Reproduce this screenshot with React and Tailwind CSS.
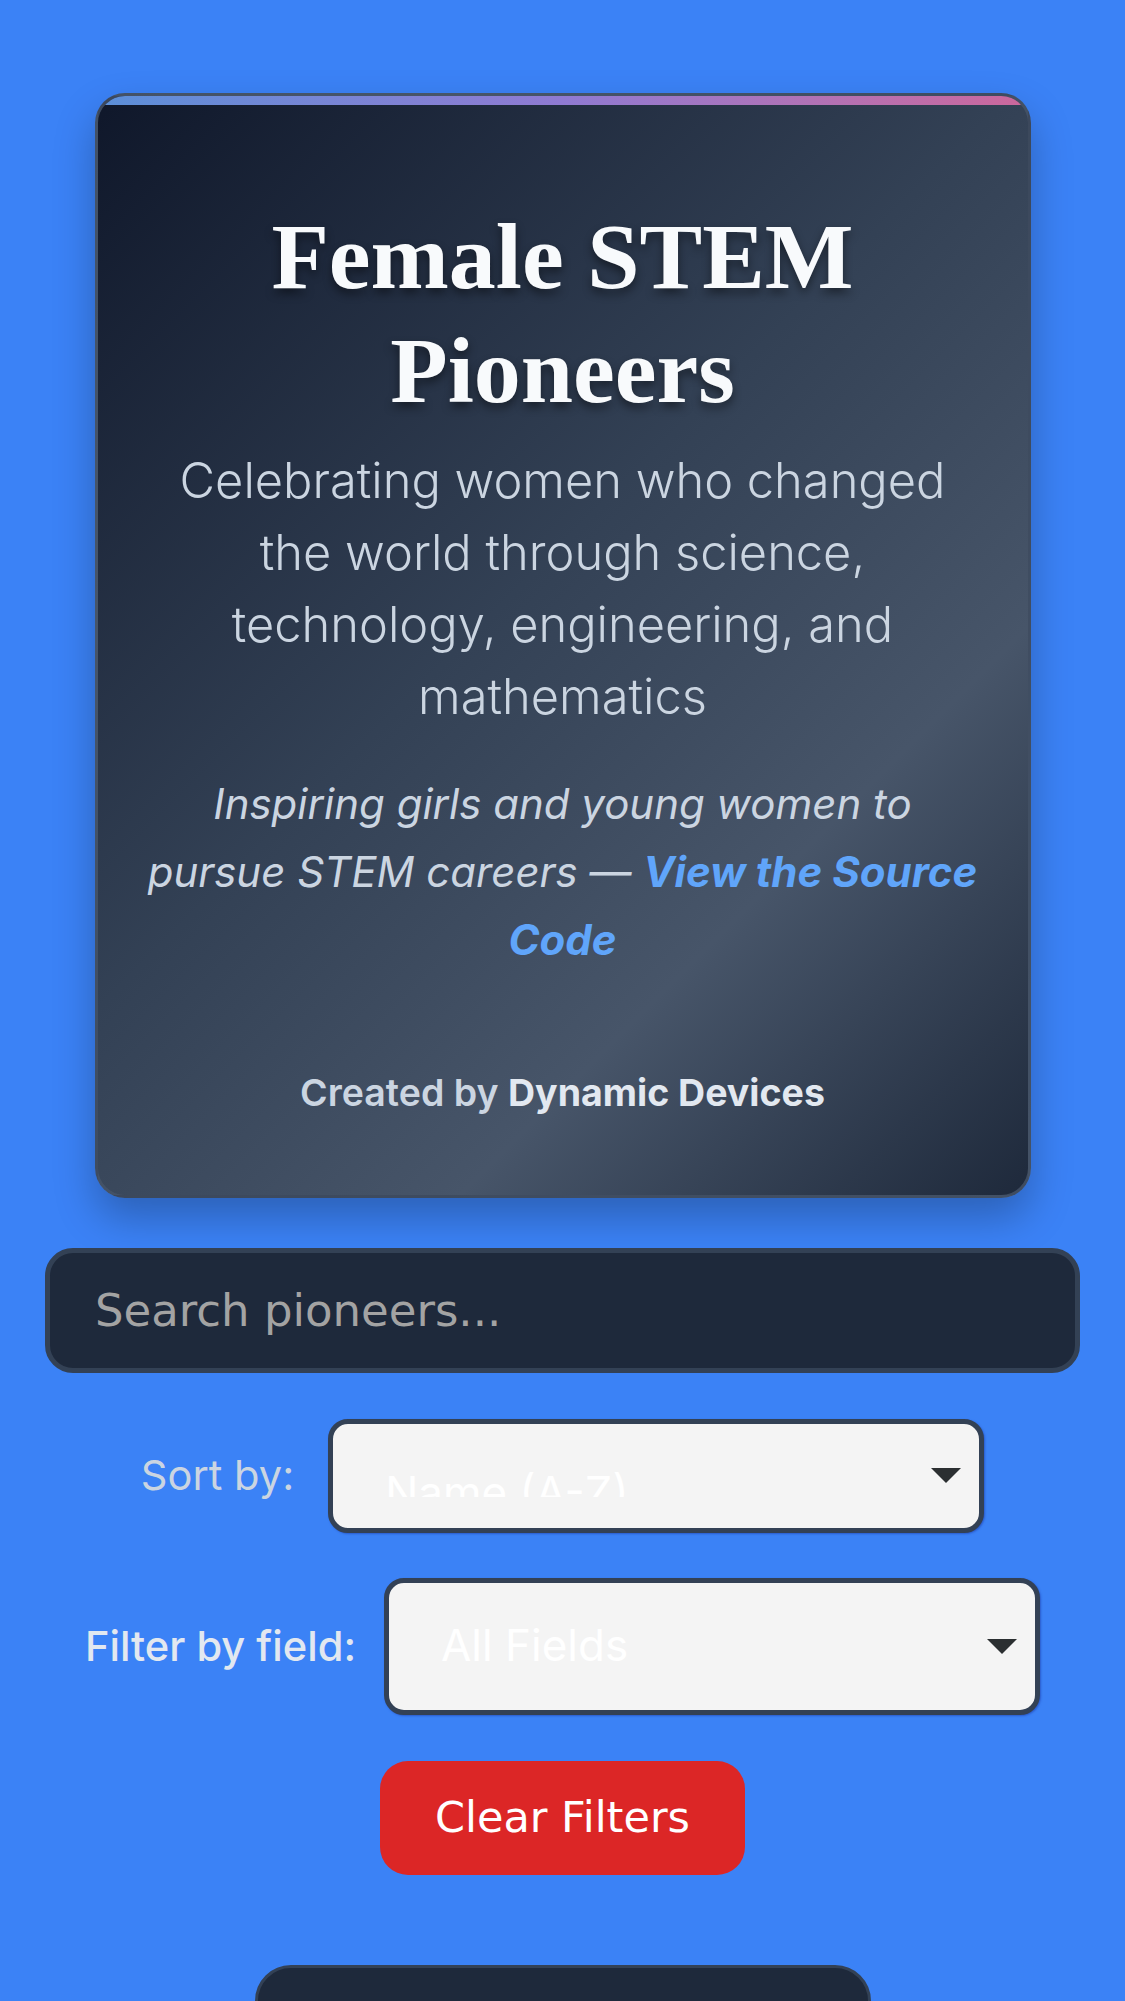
import { useState } from "react"

const Arrow = () => (
  <svg width="30" height="15" viewBox="0 0 30 15" className="shrink-0">
    <path d="M0 0H30L15 15Z" fill="#2b2f31" />
  </svg>
)

// fake native-looking select box, text gets clipped like the original
const SelectBox = ({ value, height, textTop, clipHeight }) => (
  <div
    className="flex items-center w-[656px] rounded-[20px] border-[5px] border-[#334155] bg-[#f4f4f4] pl-[52px] pr-[18px] shadow-[1px_1px_2px_rgba(30,64,175,0.6)]"
    style={{ height }}
  >
    <div className="flex-1 self-start overflow-hidden" style={{ marginTop: textTop, height: clipHeight }}>
      <span className="block font-['Inter',sans-serif] text-[44px] leading-[53px] text-white whitespace-nowrap">
        {value}
      </span>
    </div>
    <Arrow />
  </div>
)

export default function App() {
  const [search, setSearch] = useState("")

  return (
    <div className="min-h-screen w-full bg-[#3b82f6] pt-[93px] pb-10 overflow-hidden">
      {/* Header card */}
      <div className="mx-auto w-[936px] overflow-hidden rounded-[30px] border-[3px] border-[#475569]/80 bg-[linear-gradient(135deg,#0f172a_0%,#334155_45%,#475569_72%,#1e293b_100%)] shadow-[0_20px_40px_rgba(0,0,0,0.25)]">
        <div className="h-[9px] bg-linear-to-r from-[#5a8fd8] via-[#8f7ad2] to-[#cc679c]" />
        <div className="px-[47px] pt-[94px] pb-[73px] text-center font-['Inter',sans-serif]">
          <h1 className="font-['Liberation_Serif',serif] text-[94px] leading-[114px] font-bold text-[#f8fafc] [text-shadow:0_5px_10px_rgba(0,0,0,0.45)]">
            Female STEM Pioneers
          </h1>
          <p className="mt-[18px] text-[48.8px] leading-[72px] font-light text-[#cbd5e1]">
            Celebrating women who changed the world through science, technology, engineering, and mathematics
          </p>
          <p className="mt-[37px] text-[42px] leading-[68px] italic text-[#cbd5e1]">
            Inspiring girls and young women to pursue STEM careers —{" "}
            <a href="#" className="font-bold text-[#60a5fa]">
              View the Source Code
            </a>
          </p>
          <p className="mt-[90px] text-[37.5px] leading-[57.6px] font-semibold text-[#cbd5e1]">
            Created by <span className="font-bold text-[#e2e8f0]">Dynamic Devices</span>
          </p>
        </div>
      </div>

      {/* Controls */}
      <div className="px-[45px] mt-[50px]">
        <input
          type="text"
          value={search}
          onChange={(e) => setSearch(e.target.value)}
          placeholder="Search pioneers..."
          className="block w-full h-[125px] rounded-[28px] border-[5px] border-[#334155] bg-[#1e293b] pl-[45px] font-['DejaVu_Sans',sans-serif] text-[45px] text-white placeholder:text-[#a3a3a3] focus:outline-none"
        />
      </div>

      <div className="mt-[46px] flex items-center justify-center gap-[34px]">
        <label className="font-['Inter',sans-serif] text-[41.6px] text-[#cbd5e1]">Sort by:</label>
        <SelectBox value="Name (A-Z)" height={114} textTop={42} clipHeight={31} />
      </div>

      <div className="mt-[45px] flex items-center justify-center gap-[28px]">
        <label className="font-['Inter',sans-serif] text-[41.6px] font-medium text-[#e2e8f0]">Filter by field:</label>
        <SelectBox value="All Fields" height={137} textTop={36} clipHeight={53} />
      </div>

      <div className="mt-[46px] flex justify-center">
        <button
          type="button"
          onClick={() => setSearch("")}
          className="w-[365px] h-[114px] rounded-[28px] bg-[#dc2626] font-['DejaVu_Sans',sans-serif] text-[43px] text-white"
        >
          Clear Filters
        </button>
      </div>

      {/* first pioneer card, cut off by the viewport */}
      <div className="mx-auto mt-[90px] w-[616px] h-[300px] rounded-[36px] border-[3px] border-[#334155] bg-[#1e293b]" />
    </div>
  )
}
